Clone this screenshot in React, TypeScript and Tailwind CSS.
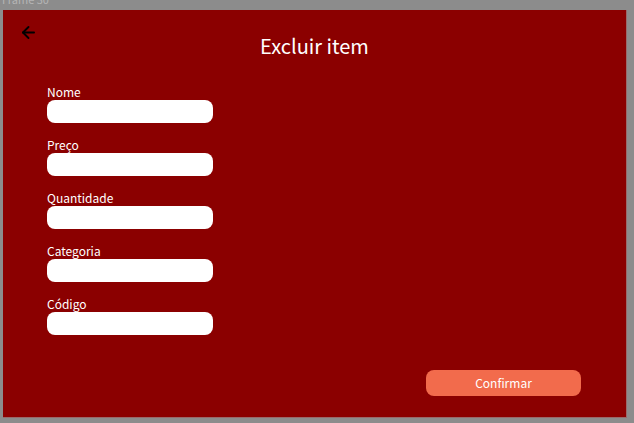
import { ArrowLeft } from "lucide-react"

const campos = ["Nome", "Preço", "Quantidade", "Categoria", "Código"]

export default function App() {
  return (
    <div
      className="relative w-[634px] h-[423px] overflow-hidden bg-[#8c8c8c] pt-[10px] pl-[3px]"
      style={{ fontFamily: '"Noto Sans CJK KR", "Noto Sans", sans-serif' }}
    >
      {/* nome do frame, cortado no topo */}
      <span className="absolute left-[2px] top-[-9px] text-[11px] text-[#b5b5b5]">Frame 30</span>

      <div className="w-[624px] h-[408px] bg-[#8b0000] border-r border-b border-[#9a6a6a] flex flex-col">
        <div className="relative h-[56px] flex items-center justify-center pt-[15px]">
          <button className="absolute left-[16px] top-[13px] text-black">
            <ArrowLeft size={19} strokeWidth={2.4} />
          </button>
          <h1 className="text-[20px] text-white leading-none">Excluir item</h1>
        </div>

        <div className="flex flex-col gap-[14px] pl-[44px] pt-[18px]">
          {campos.map((campo) => (
            <div key={campo} className="flex flex-col">
              <label className="text-[12px] leading-[16px] text-white">{campo}</label>
              <input className="w-[166px] h-[23px] rounded-[8px] bg-white outline-none" />
            </div>
          ))}
        </div>

        <div className="flex justify-end pr-[45px] mt-auto mb-[21px]">
          <button className="w-[155px] h-[26px] rounded-[8px] bg-[#f26b4c] text-white text-[12px]">
            Confirmar
          </button>
        </div>
      </div>
    </div>
  )
}
